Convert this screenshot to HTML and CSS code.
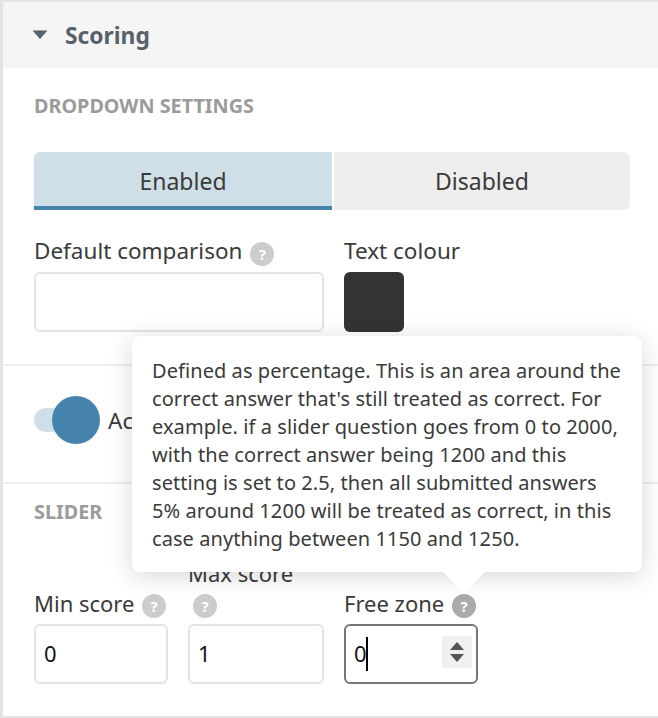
FILE: index.html
```html
<!DOCTYPE html>
<html lang="en">
<head>
<meta charset="utf-8">
<title>Scoring</title>
<link rel="stylesheet" href="styles.css">
</head>
<body>
<div class="panel">
  <div class="panel-head">
    <svg class="caret" width="16" height="10" viewBox="0 0 16 10"><path d="M0.5 0.5H15.5L8 9Z" fill="#56616a"/></svg>
    <span class="panel-title">Scoring</span>
  </div>
  <section class="block block-dropdown">
    <h3 class="caps">DROPDOWN SETTINGS</h3>
    <div class="tabs">
      <div class="tab tab-on">Enabled</div>
      <div class="tab">Disabled</div>
    </div>
    <div class="fields-top">
      <div class="field">
        <label class="lbl">Default comparison <span class="help">?</span></label>
        <div class="input"></div>
      </div>
      <div class="field">
        <label class="lbl">Text colour</label>
        <div class="swatch"></div>
      </div>
    </div>
  </section>
  <section class="block block-toggle">
    <div class="toggle"><span class="knob"></span></div>
    <span class="toggle-label">Active</span>
  </section>
  <section class="block block-slider">
    <h3 class="caps">SLIDER</h3>
    <div class="fields-slider">
      <div class="field">
        <label class="lbl">Min score <span class="help">?</span></label>
        <div class="input">0</div>
      </div>
      <div class="field">
        <label class="lbl">Max score<br><span class="help help-wrapped">?</span></label>
        <div class="input">1</div>
      </div>
      <div class="field">
        <label class="lbl">Free zone <span class="help help-on">?</span></label>
        <div class="input input-focus"><span class="value">0</span><span class="caret-bar"></span>
          <span class="spin"><svg width="16" height="22" viewBox="0 0 16 22"><path d="M8 1L15 9H1Z M1 13H15L8 21Z" fill="#555"/></svg></span>
        </div>
      </div>
    </div>
  </section>
</div>
<div class="tooltip">
  Defined as percentage. This is an area around the correct answer that's still treated as correct. For example. if a slider question goes from 0 to 2000, with the correct answer being 1200 and this setting is set to 2.5, then all submitted answers 5% around 1200 will be treated as correct, in this case anything between 1150 and 1250.
  <span class="tip-arrow"></span>
</div>
</body>
</html>
```
FILE: styles.css
```css
* { box-sizing: border-box; }
html, body { margin: 0; padding: 0; }
body {
  position: relative;
  width: 658px;
  height: 718px;
  overflow: hidden;
  background: #fff;
  color: #3a3a3a;
  font-family: "Noto Sans", sans-serif;
  font-size: 22.5px;
}
.panel {
  height: 718px;
  border: 3px solid #e3e3e3;
  border-width: 2px 0 2px 3px;
}
.panel-head {
  height: 66px;
  background: #f5f5f5;
  display: flex;
  align-items: center;
  padding-left: 29px;
  gap: 17px;
}
.panel-title { font-weight: 700; font-size: 22.8px; color: #56616a; }
.block { border-bottom: 2px solid #eee; padding: 0 28px 0 31px; }
.block-dropdown { height: 298px; padding-top: 25px; }
.block-toggle { height: 118px; padding-bottom: 8px; display: flex; align-items: center; gap: 8px; }
.block-slider { border-bottom: 0; padding-top: 15px; }
.caps { margin: 0; font-size: 19.8px; line-height: 26px; font-weight: 700; color: #9b9b9b; }
.tabs { display: flex; gap: 2px; margin-top: 33px; height: 58px; }
.tab {
  flex: 1;
  background: #eee;
  display: flex;
  align-items: center;
  justify-content: center;
  border-radius: 0 6px 6px 0;
  font-size: 23px;
  padding-bottom: 1px;
}
.tab-on {
  flex: 0 0 298px;
  background: #cfdfe7;
  border-bottom: 4px solid #4583ad;
  border-radius: 6px 0 0 0;
  padding: 3px 0 0;
}
.fields-top { display: grid; grid-template-columns: 290px 134px; gap: 20px; margin-top: 28px; }
.fields-slider { display: grid; grid-template-columns: 134px 136px 134px; gap: 20px; align-items: end; margin-top: 33px; font-size: 22px; }
.lbl { display: block; line-height: 30px; margin-bottom: 6px; white-space: nowrap; }
.fields-top .lbl { line-height: 26px; margin-bottom: 8px; }
.help {
  display: inline-flex;
  align-items: center;
  justify-content: center;
  width: 24px;
  height: 24px;
  margin: -4px 0 -4px 2px;
  border-radius: 50%;
  background: #ccc;
  color: #fff;
  font-size: 15px;
  font-weight: 700;
  vertical-align: -1px;
}
.fields-slider .help { vertical-align: 0; }
.fields-slider .help-wrapped { margin-left: 5px; }
.help-on { background: #aaa; }
.input {
  position: relative;
  height: 60px;
  border: 2px solid #e3e3e3;
  border-radius: 6px;
  display: flex;
  align-items: center;
  padding: 0 0 2px 8px;
  color: #111;
  font-size: 22px;
}
.input-focus { border-color: #777; }
.caret-bar { width: 2px; height: 34px; background: #000; margin: 2px 0 0 -1px; }
.spin {
  position: absolute;
  right: 4px;
  top: 10px;
  width: 30px;
  height: 32px;
  background: #f0f0f0;
  border-radius: 2px;
  display: flex;
  align-items: center;
  justify-content: center;
}
.swatch { width: 60px; height: 60px; background: #333; border-radius: 6px; }
.toggle { position: relative; width: 50px; height: 24px; background: #cfdfe7; border-radius: 12px; }
.knob { position: absolute; left: 18px; top: -12px; width: 48px; height: 48px; border-radius: 50%; background: #4583ad; }
.toggle-label { margin-left: 16px; }
.tooltip {
  position: absolute;
  left: 132px;
  top: 336px;
  width: 510px;
  height: 236px;
  padding: 21px 20px;
  background: #fff;
  border-radius: 8px;
  box-shadow: 0 4px 24px rgba(0,0,0,0.16);
  font-size: 20px;
  letter-spacing: 0.07px;
  line-height: 28px;
  color: #3a3a3a;
}
.tip-arrow {
  position: absolute;
  left: 311px;
  top: 236px;
  width: 0;
  height: 0;
  border-left: 21px solid transparent;
  border-right: 21px solid transparent;
  border-top: 21px solid #fff;
}
```
